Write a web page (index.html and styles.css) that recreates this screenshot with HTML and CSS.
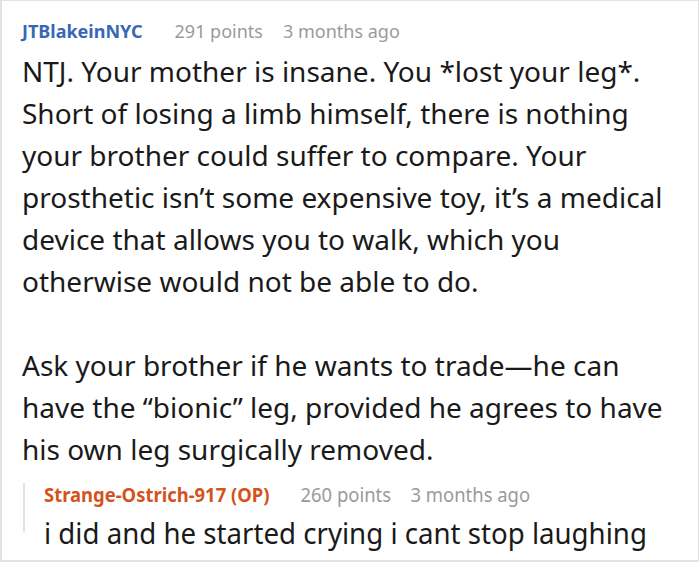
FILE: index.html
```html
<!DOCTYPE html>
<html>
<head>
<meta charset="utf-8">
<link rel="stylesheet" href="styles.css">
</head>
<body>
<div class="card">
  <div class="meta">
    <span class="user">JTBlakeinNYC</span>
    <span class="info">291 points</span>
    <span class="info">3 months ago</span>
  </div>
  <div class="body">
    <p>NTJ. Your mother is insane. You *lost your leg*. Short of losing a limb himself, there is nothing your brother could suffer to compare. Your prosthetic isn’t some expensive toy, it’s a medical device that allows you to walk, which you otherwise would not be able to do.</p>
    <p>Ask your brother if he wants to trade—he can have the “bionic” leg, provided he agrees to have his own leg surgically removed.</p>
  </div>
  <div class="reply">
    <div class="reply-inner">
      <div class="meta reply-meta">
        <span class="user op">Strange-Ostrich-917 (OP)</span>
        <span class="info">260 points</span>
        <span class="info">3 months ago</span>
      </div>
      <p class="reply-text">i did and he started crying i cant stop laughing</p>
    </div>
  </div>
</div>
</body>
</html>
```
FILE: styles.css
```css
html, body {
  margin: 0;
  padding: 0;
  background: #fff;
}
.card {
  box-sizing: border-box;
  width: 699px;
  height: 562px;
  border: 1px solid #e2e2e2;
  border-left-width: 2px;
  border-bottom-width: 2px;
  padding: 18px 0 0 20px;
  font-family: "Noto Sans", "Open Sans", sans-serif;
  color: #1a1a1a;
  overflow: hidden;
}
.meta {
  display: flex;
  align-items: baseline;
  gap: 20px;
  font-size: 18px;
  line-height: 24px;
}
.user {
  font-weight: bold;
  color: #3768b5;
  margin-right: 12px;
}
.info {
  color: #9a9a9a;
}
.body {
  margin-top: 7px;
  font-size: 28px;
  line-height: 42px;
  width: 652px;
}
.body p {
  margin: 0 0 42px 0;
}
.body p:last-child {
  margin-bottom: 0;
}
.reply {
  margin-top: 25px;
  margin-left: 1px;
  height: 49px;
  border-left: 2px solid #e2e2e2;
  padding-left: 19px;
}
.reply-inner {
  margin-top: -12px;
  transform: scaleX(0.97);
  transform-origin: left top;
  width: 700px;
}
.reply-meta {
  font-size: 19px;
}
.op {
  color: #d4531c;
}
.reply-text {
  margin: 6px 0 0 0;
  font-size: 28.5px;
  line-height: 40px;
}
```
